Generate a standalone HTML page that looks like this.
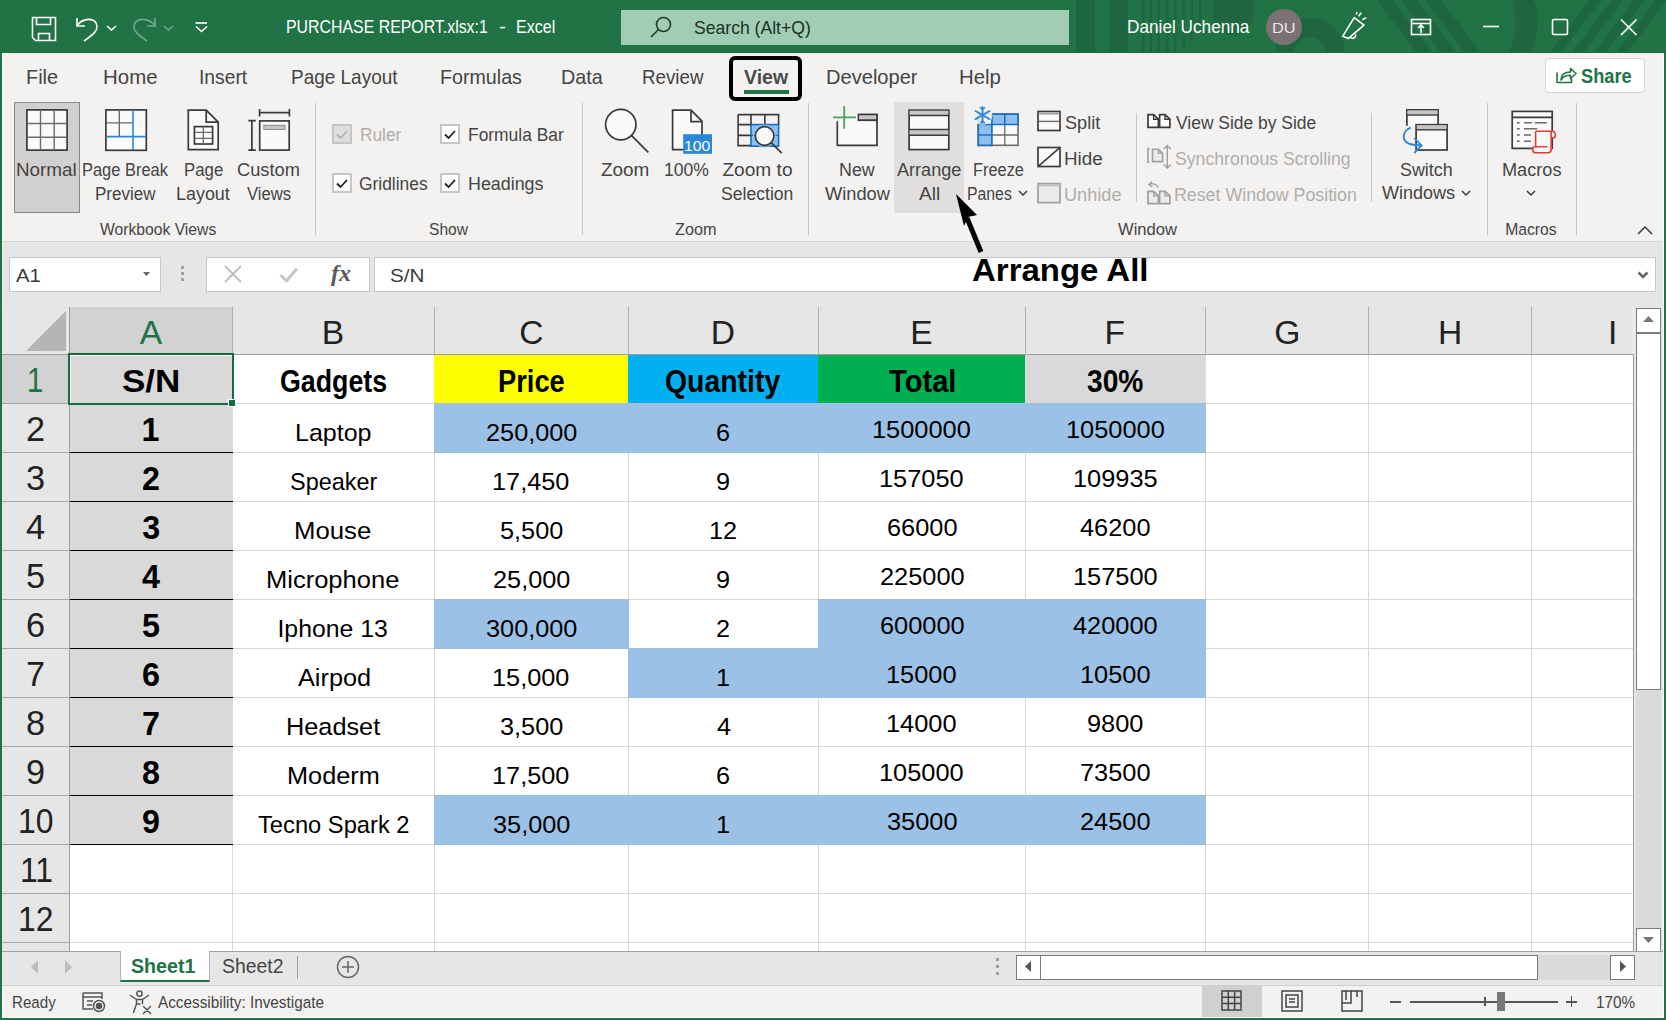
<!DOCTYPE html>
<html><head><meta charset="utf-8">
<style>
*{margin:0;padding:0;box-sizing:border-box}
html,body{width:1666px;height:1020px;overflow:hidden;background:#f3f2f1;font-family:"Liberation Sans",sans-serif;color:#444}
.a{position:absolute}
.t{position:absolute;white-space:nowrap;line-height:1}
svg{position:absolute;overflow:visible}
</style></head><body>

<div class="a" style="left:0px;top:0px;width:1666px;height:53px;background:#217346;overflow:hidden"></div>
<svg width="1666" height="53" style="left:0;top:0"><defs><clipPath id="tb"><rect x="0" y="0" width="1666" height="52"/></clipPath></defs><g clip-path="url(#tb)"><g fill="#1e6640"><rect x="1076" y="0" width="19" height="53"/><rect x="1110" y="0" width="18" height="53"/><rect x="1142" y="0" width="2.6" height="53"/><rect x="1149.5" y="0" width="2.6" height="53"/><rect x="1157" y="0" width="2.6" height="53"/><rect x="1166" y="0" width="2.6" height="53"/><rect x="1174" y="0" width="2.6" height="53"/><rect x="1182.5" y="0" width="2.6" height="48"/><rect x="1190.5" y="0" width="2.6" height="40"/><rect x="1198.7" y="0" width="2.6" height="30"/><path d="M1213 0v15a20.3 20.3 0 0 0 40.6 0V0z"/><path d="M1377 0h16l40 53h-16z"/><path d="M1401 0h16l40 53h-16z"/><path d="M1425 0h16l40 53h-16z"/><path d="M1512 0h22c6 18 4 38-3 53h-22c7-15 9-35 3-53z"/><path d="M1550 53h11l40-53h-11z"/><path d="M1572 53h11l40-53h-11z"/><path d="M1594 53h11l40-53h-11z"/><path d="M1616 53h11l40-53h-11z"/></g><circle cx="1310" cy="53" r="25.5" fill="none" stroke="#1e6640" stroke-width="19"/></g></svg>
<svg width="240" height="53" style="left:0;top:0" fill="none" stroke="#fff" stroke-width="1.6"><path d="M32.5 17.5h23v23h-20l-3-3z"/><path d="M36.5 17.5v7h14v-7"/><path d="M38.5 40.5v-7h11v7"/><path d="M77 18v8h8"/><path d="M77 26 C82 18 97 16 97 27 C97 31 94 34 84 41"/><path d="M107 26l4.5 4 4.5-4"/></svg>
<svg width="240" height="53" style="left:0;top:0" fill="none" stroke="#6fa98a" stroke-width="1.6"><path d="M155 18v8h-8"/><path d="M155 26 C150 18 134 16 134 27 C134 31 137 34 147 41"/><path d="M164 26l4.5 4 4.5-4"/></svg>
<svg width="240" height="53" style="left:0;top:0" fill="none" stroke="#fff" stroke-width="1.6"><path d="M195.5 23h11.5"/><path d="M196 26.5l5.5 5 5.5-5"/></svg>
<div class="t" style="left:285.73px;top:18.36px;font-size:18.71px;color:#fff;transform:scaleX(0.8499);transform-origin:0 0;">PURCHASE REPORT.xlsx:1</div>
<div class="t" style="left:499.08px;top:18.36px;font-size:18.71px;color:#fff;transform:scaleX(1.0905);transform-origin:0 0;">-</div>
<div class="t" style="left:515.71px;top:18.36px;font-size:18.71px;color:#fff;transform:scaleX(0.8596);transform-origin:0 0;">Excel</div>
<div class="a" style="left:621px;top:10px;width:448px;height:35px;background:#a0cdb4;"></div>
<svg width="30" height="30" style="left:648px;top:14px" fill="none" stroke="#1d3a2a" stroke-width="1.6"><circle cx="15.5" cy="10.5" r="7"/><path d="M10.5 15.5L3 23"/></svg>
<div class="t" style="left:693.91px;top:18.12px;font-size:19.00px;color:#1b3326;transform:scaleX(0.9254);transform-origin:0 0;">Search (Alt+Q)</div>
<div class="t" style="left:1127.12px;top:18.04px;font-size:18.86px;color:#fff;transform:scaleX(0.9121);transform-origin:0 0;">Daniel Uchenna</div>
<div class="a" style="left:1266px;top:9px;width:36px;height:36px;border-radius:50%;background:#7d7273"></div>
<div class="t" style="left:1271.99px;top:20.18px;font-size:15.14px;color:#e8e8e8;transform:scaleX(1.0844);transform-origin:0 0;">DU</div>
<svg width="1666" height="53" style="left:0;top:0" fill="none" stroke="#fff" stroke-width="1.6"><path d="M1342.8 36.2L1354.2 17.6L1364 25.2L1348.4 38.4Z" stroke-linejoin="round"/><path d="M1350.2 36.6a2.8 2.8 0 1 0 5.2-2.2"/><path d="M1358.6 16.4l2.6-3.6M1362.4 19.8l3.8-2.2M1356.4 14.6l0.4-2.6"/><rect x="1411.5" y="19.5" width="19" height="15"/><path d="M1411.5 23.5h19"/><path d="M1421 33v-8M1418 28l3-3 3 3"/><path d="M1483 26.5h16"/><rect x="1552.5" y="19.5" width="15" height="15" rx="1.5"/><path d="M1621 19.5l15.5 15.5M1636.5 19.5l-15.5 15.5"/></svg>
<div class="a" style="left:0px;top:53px;width:2px;height:967px;background:#217346;z-index:5"></div>
<div class="a" style="left:2px;top:53px;width:1px;height:189px;background:#fdfdfd;z-index:5"></div>
<div class="a" style="left:2px;top:242px;width:1px;height:65px;background:#ededed;z-index:5"></div>
<div class="a" style="left:2px;top:986px;width:1px;height:32px;background:#fdfdfd;z-index:5"></div>
<div class="a" style="left:1663px;top:53px;width:1px;height:965px;background:#fdfdfd;z-index:5"></div>
<div class="a" style="left:1664px;top:53px;width:2px;height:967px;background:#217346;z-index:5"></div>
<div class="a" style="left:2px;top:53px;width:1662px;height:1px;background:#fdfdfd;z-index:5"></div>
<div class="a" style="left:2px;top:1017px;width:1662px;height:1px;background:#fdfdfd;z-index:5"></div>
<div class="a" style="left:0px;top:1018px;width:1666px;height:2px;background:#217346;z-index:5"></div>
<div class="a" style="left:0px;top:52px;width:1666px;height:1px;background:#1a6a3c;z-index:5"></div>
<div class="t" style="left:25.81px;top:66.93px;font-size:20.29px;color:#444;transform:scaleX(0.9826);transform-origin:0 0;">File</div>
<div class="t" style="left:103.36px;top:66.93px;font-size:20.29px;color:#444;transform:scaleX(1.0092);transform-origin:0 0;">Home</div>
<div class="t" style="left:199.27px;top:66.93px;font-size:20.29px;color:#444;transform:scaleX(0.9490);transform-origin:0 0;">Insert</div>
<div class="t" style="left:290.88px;top:66.93px;font-size:20.29px;color:#444;transform:scaleX(0.9351);transform-origin:0 0;">Page Layout</div>
<div class="t" style="left:439.73px;top:66.93px;font-size:20.29px;color:#444;transform:scaleX(0.9689);transform-origin:0 0;">Formulas</div>
<div class="t" style="left:560.92px;top:66.93px;font-size:20.29px;color:#444;transform:scaleX(0.9738);transform-origin:0 0;">Data</div>
<div class="t" style="left:641.50px;top:66.93px;font-size:20.29px;color:#444;transform:scaleX(0.9243);transform-origin:0 0;">Review</div>
<div class="t" style="left:743.80px;top:66.93px;font-size:20.29px;color:#4a4a4a;font-weight:bold;transform:scaleX(0.9619);transform-origin:0 0;">View</div>
<div class="t" style="left:826.39px;top:66.93px;font-size:20.29px;color:#444;transform:scaleX(0.9903);transform-origin:0 0;">Developer</div>
<div class="t" style="left:958.87px;top:66.93px;font-size:20.29px;color:#444;transform:scaleX(1.0063);transform-origin:0 0;">Help</div>
<div class="a" style="left:744px;top:90px;width:45px;height:4px;background:#217346;"></div>
<div class="a" style="left:729px;top:56px;width:73px;height:45px;border:4px solid #000;border-radius:6px"></div>
<div class="a" style="left:1545px;top:58px;width:100px;height:35px;background:#fff;border:1px solid #d6d4d2;border-radius:4px"></div>
<svg width="24" height="24" style="left:1556px;top:64px" fill="none" stroke="#217346" stroke-width="1.6" stroke-linejoin="round"><path d="M1 8.5v10h14.5v-4"/><path d="M5 15.5c0.5-5 4-7.5 9.5-7.5V4.5l5.5 5-5.5 5v-3.2c-4.5 0-7.5 1.5-9.5 4.7z"/></svg>
<div class="t" style="left:1580.95px;top:66.03px;font-size:20.29px;color:#217346;font-weight:bold;transform:scaleX(0.8988);transform-origin:0 0;">Share</div>
<div class="a" style="left:0px;top:241px;width:1666px;height:1px;background:#d6d4d2;"></div>
<div class="a" style="left:0px;top:242px;width:1666px;height:65px;background:#e6e6e6;"></div>
<div class="a" style="left:14px;top:102px;width:66px;height:111px;background:#d2d0ce;border:1px solid #8a8886"></div>
<div class="t" style="left:16.09px;top:160.10px;font-size:19.14px;color:#444;transform:scaleX(0.9853);transform-origin:0 0;">Normal</div>
<div class="t" style="left:82.38px;top:160.10px;font-size:19.14px;color:#444;transform:scaleX(0.8600);transform-origin:0 0;">Page Break</div>
<div class="t" style="left:95.14px;top:183.80px;font-size:19.14px;color:#444;transform:scaleX(0.8902);transform-origin:0 0;">Preview</div>
<div class="t" style="left:184.45px;top:160.10px;font-size:19.14px;color:#444;transform:scaleX(0.8793);transform-origin:0 0;">Page</div>
<div class="t" style="left:176.26px;top:183.80px;font-size:19.14px;color:#444;transform:scaleX(0.9373);transform-origin:0 0;">Layout</div>
<div class="t" style="left:237.09px;top:160.10px;font-size:19.14px;color:#444;transform:scaleX(0.9537);transform-origin:0 0;">Custom</div>
<div class="t" style="left:247.42px;top:183.80px;font-size:19.14px;color:#444;transform:scaleX(0.8706);transform-origin:0 0;">Views</div>
<div class="t" style="left:99.92px;top:221.70px;font-size:15.71px;color:#444;">Workbook Views</div>
<div class="a" style="left:315px;top:103px;width:1px;height:132px;background:#c8c6c4;"></div>
<div class="a" style="left:332px;top:124px;width:20px;height:20px;border:2px solid #c8c6c4;background:#e1dfdd"></div>
<svg width="20" height="20" style="left:332px;top:124px" fill="none" stroke="#b3b0ad" stroke-width="1.8"><path d="M5 10.5l3.5 3.5L15 7"/></svg>
<div class="t" style="left:359.52px;top:126.34px;font-size:18.86px;color:#b0aeab;transform:scaleX(0.9147);transform-origin:0 0;">Ruler</div>
<div class="a" style="left:332px;top:173px;width:20px;height:20px;border:2px solid #c8c6c4;background:#fff"></div>
<svg width="20" height="20" style="left:332px;top:173px" fill="none" stroke="#201f1e" stroke-width="1.8"><path d="M5 10.5l3.5 3.5L15 7"/></svg>
<div class="a" style="left:440px;top:124px;width:20px;height:20px;border:2px solid #c8c6c4;background:#fff"></div>
<svg width="20" height="20" style="left:440px;top:124px" fill="none" stroke="#201f1e" stroke-width="1.8"><path d="M5 10.5l3.5 3.5L15 7"/></svg>
<div class="a" style="left:440px;top:173px;width:20px;height:20px;border:2px solid #c8c6c4;background:#fff"></div>
<svg width="20" height="20" style="left:440px;top:173px" fill="none" stroke="#201f1e" stroke-width="1.8"><path d="M5 10.5l3.5 3.5L15 7"/></svg>
<div class="t" style="left:467.61px;top:126.34px;font-size:18.86px;color:#444;transform:scaleX(0.9232);transform-origin:0 0;">Formula Bar</div>
<div class="t" style="left:359.43px;top:175.24px;font-size:18.86px;color:#444;transform:scaleX(0.9218);transform-origin:0 0;">Gridlines</div>
<div class="t" style="left:467.57px;top:175.24px;font-size:18.86px;color:#444;transform:scaleX(0.9471);transform-origin:0 0;">Headings</div>
<div class="t" style="left:428.50px;top:221.70px;font-size:15.71px;color:#444;transform:scaleX(0.9908);transform-origin:0 0;">Show</div>
<div class="a" style="left:582px;top:103px;width:1px;height:132px;background:#c8c6c4;"></div>
<div class="t" style="left:601.43px;top:160.10px;font-size:19.14px;color:#444;transform:scaleX(0.9896);transform-origin:0 0;">Zoom</div>
<div class="t" style="left:664.48px;top:160.10px;font-size:19.14px;color:#444;transform:scaleX(0.9190);transform-origin:0 0;">100%</div>
<div class="t" style="left:722.42px;top:160.10px;font-size:19.14px;color:#444;">Zoom to</div>
<div class="t" style="left:721.21px;top:183.80px;font-size:19.14px;color:#444;transform:scaleX(0.9196);transform-origin:0 0;">Selection</div>
<div class="t" style="left:674.51px;top:221.70px;font-size:15.71px;color:#444;transform:scaleX(1.0347);transform-origin:0 0;">Zoom</div>
<div class="a" style="left:808px;top:103px;width:1px;height:132px;background:#c8c6c4;"></div>
<div class="a" style="left:894px;top:102px;width:70px;height:111px;background:#e1dfdd;"></div>
<div class="t" style="left:839.17px;top:160.10px;font-size:19.14px;color:#444;transform:scaleX(0.9335);transform-origin:0 0;">New</div>
<div class="t" style="left:824.61px;top:183.80px;font-size:19.14px;color:#444;transform:scaleX(0.9537);transform-origin:0 0;">Window</div>
<div class="t" style="left:896.91px;top:160.10px;font-size:19.14px;color:#444;transform:scaleX(0.9449);transform-origin:0 0;">Arrange</div>
<div class="t" style="left:918.90px;top:183.80px;font-size:19.14px;color:#444;">All</div>
<div class="t" style="left:972.69px;top:160.10px;font-size:19.14px;color:#444;transform:scaleX(0.8558);transform-origin:0 0;">Freeze</div>
<div class="t" style="left:966.74px;top:183.80px;font-size:19.14px;color:#444;transform:scaleX(0.8258);transform-origin:0 0;">Panes</div>
<svg width="12" height="8" style="left:1017.5px;top:189.5px" fill="none" stroke="#3b3a39" stroke-width="1.5"><path d="M1 1l4 4 4-4"/></svg>
<div class="t" style="left:1064.69px;top:113.64px;font-size:18.86px;color:#444;transform:scaleX(0.9599);transform-origin:0 0;">Split</div>
<div class="t" style="left:1063.99px;top:149.84px;font-size:18.86px;color:#444;">Hide</div>
<div class="t" style="left:1064.14px;top:185.64px;font-size:18.86px;color:#b0aeab;transform:scaleX(0.9615);transform-origin:0 0;">Unhide</div>
<div class="a" style="left:1136px;top:113px;width:1px;height:89px;background:#c8c6c4;"></div>
<div class="t" style="left:1175.61px;top:113.64px;font-size:18.86px;color:#444;transform:scaleX(0.9245);transform-origin:0 0;">View Side by Side</div>
<div class="t" style="left:1174.91px;top:149.54px;font-size:18.86px;color:#b0aeab;transform:scaleX(0.9361);transform-origin:0 0;">Synchronous Scrolling</div>
<div class="t" style="left:1174.28px;top:186.04px;font-size:18.86px;color:#b0aeab;transform:scaleX(0.9429);transform-origin:0 0;">Reset Window Position</div>
<div class="t" style="left:1117.92px;top:221.70px;font-size:15.71px;color:#444;transform:scaleX(1.0561);transform-origin:0 0;">Window</div>
<div class="a" style="left:1371px;top:113px;width:1px;height:89px;background:#c8c6c4;"></div>
<div class="t" style="left:1400.20px;top:160.20px;font-size:19.14px;color:#444;transform:scaleX(0.9342);transform-origin:0 0;">Switch</div>
<div class="t" style="left:1381.51px;top:183.40px;font-size:19.14px;color:#444;transform:scaleX(0.9420);transform-origin:0 0;">Windows</div>
<svg width="12" height="8" style="left:1461px;top:190px" fill="none" stroke="#3b3a39" stroke-width="1.5"><path d="M1 1l4 4 4-4"/></svg>
<div class="a" style="left:1487px;top:103px;width:1px;height:132px;background:#c8c6c4;"></div>
<div class="t" style="left:1501.55px;top:160.10px;font-size:19.14px;color:#444;transform:scaleX(0.9490);transform-origin:0 0;">Macros</div>
<svg width="12" height="8" style="left:1526px;top:190px" fill="none" stroke="#3b3a39" stroke-width="1.5"><path d="M1 1l4 4 4-4"/></svg>
<div class="t" style="left:1505.15px;top:221.70px;font-size:15.71px;color:#444;">Macros</div>
<div class="a" style="left:1576px;top:103px;width:1px;height:132px;background:#c8c6c4;"></div>
<svg width="20" height="12" style="left:1637px;top:226px" fill="none" stroke="#3b3a39" stroke-width="1.5"><path d="M1 8l7-7 7 7"/></svg>
<svg width="1666" height="260" style="left:0;top:0" fill="none" stroke-linejoin="miter"><rect x="26.9" y="109.9" width="40.2" height="40.2" fill="#fafafa" stroke="#3b3a39" stroke-width="1.7"/><path d="M40.5 110v40M54.2 110v40M27 123.5h40M27 137.2h40" stroke="#6e6b68" stroke-width="1.4"/><rect x="105.9" y="109.9" width="40.4" height="40.4" fill="#fafafa" stroke="#3b3a39" stroke-width="1.7"/><path d="M119.3 110v26.5M106 122.9h26.5" stroke="#6e6b68" stroke-width="1.4"/><path d="M133 110v40M106 136.6h40" stroke="#2b88d8" stroke-width="1.6"/><path d="M188.3 110.1H206.2L218.2 122.1V149.7H188.3Z" fill="#fafafa" stroke="#3b3a39" stroke-width="1.7"/><path d="M206.2 110.1V122.1H218.2" stroke="#3b3a39" stroke-width="1.7"/><rect x="194.4" y="126.6" width="18.2" height="17.4" fill="#fafafa" stroke="#3b3a39" stroke-width="1.7"/><path d="M203.3 127v17M195 132.4h17M195 138.4h17" stroke="#6e6b68" stroke-width="1.3"/><path d="M259.6 112.7H289.4M259.6 109v7.5M289.4 109v7.5" stroke="#3b3a39" stroke-width="1.7"/><path d="M251.9 120.6V150.1M248.4 120.6h7.4M248.4 150.1h7.4" stroke="#3b3a39" stroke-width="1.7"/><rect x="259.7" y="120.9" width="29.5" height="29.2" fill="#fafafa" stroke="#3b3a39" stroke-width="1.7"/><rect x="263.8" y="125.3" width="21.2" height="4.1" fill="#c8c6c4" stroke="#8a8886" stroke-width="1"/><circle cx="620.8" cy="124.6" r="15.2" fill="#fafafa" stroke="#3b3a39" stroke-width="1.7"/><path d="M631.6 135.6L648.3 152.3" stroke="#3b3a39" stroke-width="1.7"/><path d="M672.6 110.1H691L702 121.1V149.7H672.6Z" fill="#fafafa" stroke="#3b3a39" stroke-width="1.7"/><path d="M691 110.1V121.6H702" stroke="#3b3a39" stroke-width="1.7"/><rect x="683.2" y="134.2" width="28.8" height="19.6" fill="#2b88d8"/><rect x="751" y="124.6" width="27.6" height="21.6" fill="#8cc1ef" stroke="#1b6ec2" stroke-width="1.6"/><path d="M738.1 114.6H778.6V124.6M738.1 114.6V145.6H751M751 114.6v10M764.9 114.6v10M738.1 124.6H751M738.1 135.4H751" stroke="#3b3a39" stroke-width="1.6"/><path d="M764.9 124.6v21M751 135.4h27.6" stroke="#1b6ec2" stroke-width="1.2"/><circle cx="764.6" cy="136" r="9.3" fill="#fafafa" stroke="#3b3a39" stroke-width="1.7"/><circle cx="764.6" cy="136" r="11" fill="none" stroke="#8cc1ef" stroke-width="1.3" opacity="0.6"/><path d="M771.4 142.8L781.8 153.2" stroke="#3b3a39" stroke-width="1.7"/><path d="M837.3 121.3V145.3H877V114.5H858.5" fill="#fafafa" stroke="#3b3a39" stroke-width="1.7"/><rect x="858.3" y="114.5" width="18.6" height="5.8" fill="#c8c6c4" stroke="#3b3a39" stroke-width="1.5"/><path d="M858.5 120.3H877" stroke="#3b3a39" stroke-width="1.5"/><path d="M844.2 106v22.8M833 117.3h23" stroke="#48a45f" stroke-width="1.8"/><rect x="909.1" y="110.2" width="39.7" height="39.4" fill="#fafafa" stroke="#3b3a39" stroke-width="1.7"/><rect x="909.6" y="110.7" width="38.7" height="4.6" fill="#c8c6c4"/><rect x="909.6" y="130.3" width="38.7" height="4.6" fill="#c8c6c4"/><path d="M909 115.6h40M909 129.6h40M909 135.2h40" stroke="#3b3a39" stroke-width="1.5"/><rect x="978.3" y="114.2" width="39.7" height="31.1" fill="#fafafa" stroke="#6e6b68" stroke-width="1.6"/><path d="M1004.8 124.5v21M978.3 135h40" stroke="#6e6b68" stroke-width="1.3"/><path d="M991.9 114.2H1018V124.5H991.9Z" fill="#8cc1ef" stroke="#1b6ec2" stroke-width="1.7"/><path d="M1004.8 114.2v10.3" stroke="#1b6ec2" stroke-width="1.5"/><path d="M978.3 124.5H991.9V145.3H978.3Z" fill="#8cc1ef" stroke="#1b6ec2" stroke-width="1.7"/><path d="M978.3 135h13.6" stroke="#1b6ec2" stroke-width="1.5"/><circle cx="982.5" cy="115.1" r="10" fill="#f3f2f1" opacity="0.85"/><g stroke="#2b88d8" stroke-width="1.9" stroke-linecap="round"><path d="M982.5 107v16.2M975.5 111l14 8.1M975.5 119.1l14-8.1"/><path d="M980.3 107.5l2.2 2 2.2-2M980.3 122.7l2.2-2 2.2 2" stroke-width="1.3"/></g><rect x="1038" y="111.5" width="22" height="19" fill="#fafafa" stroke="#3b3a39" stroke-width="1.7"/><path d="M1038 113.8h22" stroke="#8a8886" stroke-width="1.2"/><path d="M1038 121.4h22" stroke="#6e6b68" stroke-width="1.4"/><rect x="1038" y="147.5" width="22" height="19" fill="#fafafa" stroke="#3b3a39" stroke-width="1.7"/><path d="M1038.5 166.2L1059.5 147.8" stroke="#3b3a39" stroke-width="1.6"/><rect x="1038" y="183.6" width="22" height="19" fill="#ebebeb" stroke="#a19f9d" stroke-width="1.7"/><path d="M1038 185.6h22" stroke="#bdbbb8" stroke-width="1.3"/><path d="M1148 114.6H1153.6L1158.4 119.2V127.4H1148Z" fill="#fafafa" stroke="#3b3a39" stroke-width="1.7"/><path d="M1153.6 114.6V119.2H1158.4" stroke="#3b3a39" stroke-width="1.4"/><path d="M1159.6 114.6H1165L1169.9 119.2V127.4H1159.6Z" fill="#fafafa" stroke="#3b3a39" stroke-width="1.7"/><path d="M1165 114.6V119.2H1169.9" stroke="#3b3a39" stroke-width="1.4"/><path d="M1149.6 148.8H1148V162.2H1149.6" stroke="#a19f9d" stroke-width="1.6"/><path d="M1152.5 149.2H1158.4L1162.6 153.4V161.6H1152.5Z" fill="#ebebeb" stroke="#a19f9d" stroke-width="1.6"/><path d="M1158.4 149.2V153.4H1162.6" stroke="#a19f9d" stroke-width="1.3"/><path d="M1167.3 145.6V168M1163.8 149l3.5-3.5 3.5 3.5M1163.8 164.6l3.5 3.5 3.5-3.5" stroke="#a19f9d" stroke-width="1.4"/><path d="M1148 191.3H1153.6L1158.4 195.9V203.6H1148Z" fill="#ebebeb" stroke="#a19f9d" stroke-width="1.7"/><path d="M1153.6 191.3V195.9H1158.4" stroke="#a19f9d" stroke-width="1.3"/><path d="M1159.6 191.3H1165L1169.9 195.9V203.6H1159.6Z" fill="#ebebeb" stroke="#a19f9d" stroke-width="1.7"/><path d="M1165 191.3V195.9H1169.9" stroke="#a19f9d" stroke-width="1.3"/><path d="M1158 187.6C1157 184 1153 183 1149 184.6M1152 181.6l-3 3 3.4 2.4" stroke="#a19f9d" stroke-width="1.4"/><rect x="1407" y="110" width="31" height="15" fill="#fafafa"/><path d="M1406.9 125.8V109.8H1438.1V124.7" stroke="#3b3a39" stroke-width="1.7"/><rect x="1407.5" y="110.4" width="30" height="4.2" fill="#c8c6c4"/><path d="M1407 115h31" stroke="#3b3a39" stroke-width="1.4"/><rect x="1416.1" y="124.7" width="31" height="25.3" fill="#fafafa" stroke="#3b3a39" stroke-width="1.7"/><rect x="1416.8" y="125.3" width="29.6" height="4.2" fill="#c8c6c4"/><path d="M1416 129.8h31" stroke="#3b3a39" stroke-width="1.4"/><path d="M1410.6 127.6C1404.5 130 1402.5 136 1404.5 140C1406.5 144 1411 145.4 1422 145.4M1414.2 138.2L1421.6 145.4L1414.2 153" stroke="#2b88d8" stroke-width="1.8"/><rect x="1512.2" y="111.4" width="40" height="37" fill="#fafafa" stroke="#3b3a39" stroke-width="1.7"/><path d="M1512.2 117.4h40" stroke="#3b3a39" stroke-width="1.6"/><path d="M1516.9 122.8h2.9M1524 122.8h7.9M1534.9 122.8h12M1516.9 128.8h2.9M1524 128.8h13.3M1516.9 135h2.9M1524 135h7M1516.9 141.2h2.9M1524 141.2h7" stroke="#6e6b68" stroke-width="1.5"/><path d="M1535.6 131.3H1551.8C1554.6 131.3 1555.4 133 1555.4 135.3C1555.4 137.5 1554 138 1552.2 138H1551.2V149.6C1551.2 151.8 1550 152.7 1547.8 152.7H1535.3C1533.2 152.7 1532.6 151.4 1532.6 149.5C1532.6 147.7 1533.5 146.8 1535.2 146.8H1547.4M1535.6 131.3V146.8M1551.2 138V131.6" fill="#fafafa" stroke="#e53935" stroke-width="1.6"/></svg>
<div class="t" style="left:684.31px;top:138.30px;font-size:15.00px;color:#fff;transform:scaleX(1.0538);transform-origin:0 0;font-weight:normal;letter-spacing:0">100</div>
<div class="a" style="left:9px;top:257px;width:152px;height:35px;background:#fff;border:1px solid #c6c6c6"></div>
<div class="t" style="left:15.90px;top:265.80px;font-size:19.14px;color:#3a3a3a;transform:scaleX(1.0627);transform-origin:0 0;">A1</div>
<svg width="10" height="6" style="left:143px;top:272px"><path d="M0 0h7l-3.5 4z" fill="#666"/></svg>
<svg width="4" height="16" style="left:181px;top:266px" fill="#a0a0a0"><rect x="0" y="0" width="3" height="3"/><rect x="0" y="6" width="3" height="3"/><rect x="0" y="12" width="3" height="3"/></svg>
<div class="a" style="left:206px;top:257px;width:164px;height:35px;background:#fff;border:1px solid #c6c6c6"></div>
<svg width="30" height="30" style="left:224px;top:265px" fill="none" stroke="#c0c0c0" stroke-width="2"><path d="M1 1l16 16M17 1L1 17"/></svg>
<svg width="30" height="30" style="left:279px;top:266px" fill="none" stroke="#c6c6c6" stroke-width="3" stroke-linejoin="round"><path d="M1.5 9l6 6L18 2.5"/></svg>
<div class="t" style="left:331px;top:261px;font-family:'Liberation Serif',serif;font-style:italic;font-weight:bold;font-size:24px;color:#595959">fx</div>
<div class="a" style="left:374px;top:257px;width:1282px;height:35px;background:#fff;border:1px solid #c6c6c6"></div>
<div class="t" style="left:390.07px;top:265.80px;font-size:19.14px;color:#3a3a3a;transform:scaleX(1.0821);transform-origin:0 0;">S/N</div>
<svg width="14" height="10" style="left:1637px;top:271px" fill="none" stroke="#666" stroke-width="2.6"><path d="M1.5 1.5l4.5 4.5 4.5-4.5"/></svg>
<div class="a" style="left:2px;top:307px;width:1631px;height:644px;background:#fff;"></div>
<div class="a" style="left:2px;top:307px;width:67px;height:47px;background:#e6e6e6;"></div>
<svg width="67" height="47" style="left:2px;top:307px"><path d="M64 4V44H24z" fill="#b4b4b4"/></svg>
<div class="a" style="left:70px;top:307px;width:162px;height:47px;background:#d2d2d2;"></div>
<div class="a" style="left:232px;top:307px;width:1px;height:47px;background:#b0b0b0;"></div>
<div class="t" style="left:139.75px;top:315.78px;font-size:33.57px;color:#217346;">A</div>
<div class="a" style="left:233px;top:307px;width:201px;height:47px;background:#e6e6e6;"></div>
<div class="a" style="left:434px;top:307px;width:1px;height:47px;background:#b0b0b0;"></div>
<div class="t" style="left:321.83px;top:315.78px;font-size:33.57px;color:#222;">B</div>
<div class="a" style="left:435px;top:307px;width:193px;height:47px;background:#e6e6e6;"></div>
<div class="a" style="left:628px;top:307px;width:1px;height:47px;background:#b0b0b0;"></div>
<div class="t" style="left:519.25px;top:315.78px;font-size:33.57px;color:#222;">C</div>
<div class="a" style="left:629px;top:307px;width:189px;height:47px;background:#e6e6e6;"></div>
<div class="a" style="left:818px;top:307px;width:1px;height:47px;background:#b0b0b0;"></div>
<div class="t" style="left:710.83px;top:315.78px;font-size:33.57px;color:#222;">D</div>
<div class="a" style="left:819px;top:307px;width:206px;height:47px;background:#e6e6e6;"></div>
<div class="a" style="left:1025px;top:307px;width:1px;height:47px;background:#b0b0b0;"></div>
<div class="t" style="left:910.17px;top:315.78px;font-size:33.57px;color:#222;">E</div>
<div class="a" style="left:1026px;top:307px;width:179px;height:47px;background:#e6e6e6;"></div>
<div class="a" style="left:1205px;top:307px;width:1px;height:47px;background:#b0b0b0;"></div>
<div class="t" style="left:1104.59px;top:315.78px;font-size:33.57px;color:#222;">F</div>
<div class="a" style="left:1206px;top:307px;width:162px;height:47px;background:#e6e6e6;"></div>
<div class="a" style="left:1368px;top:307px;width:1px;height:47px;background:#b0b0b0;"></div>
<div class="t" style="left:1274.33px;top:315.78px;font-size:33.57px;color:#222;">G</div>
<div class="a" style="left:1369px;top:307px;width:162px;height:47px;background:#e6e6e6;"></div>
<div class="a" style="left:1531px;top:307px;width:1px;height:47px;background:#b0b0b0;"></div>
<div class="t" style="left:1437.91px;top:315.78px;font-size:33.57px;color:#222;">H</div>
<div class="a" style="left:1532px;top:307px;width:101px;height:47px;background:#e6e6e6;"></div>
<div class="t" style="left:1607.88px;top:315.78px;font-size:33.57px;color:#222;">I</div>
<div class="a" style="left:2px;top:354px;width:1631px;height:1px;background:#9e9e9e;"></div>
<div class="a" style="left:69px;top:307px;width:1px;height:644px;background:#9e9e9e;"></div>
<div class="a" style="left:2px;top:355px;width:67px;height:48px;background:#d2d2d2;"></div>
<div class="a" style="left:2px;top:403px;width:67px;height:1px;background:#a6a6a6;"></div>
<div class="t" style="left:27.05px;top:363.28px;font-size:34.29px;color:#217346;transform:scaleX(0.8500);transform-origin:0 0;">1</div>
<div class="a" style="left:2px;top:404px;width:67px;height:48px;background:#e6e6e6;"></div>
<div class="a" style="left:2px;top:452px;width:67px;height:1px;background:#a6a6a6;"></div>
<div class="t" style="left:25.99px;top:412.28px;font-size:34.29px;color:#222;">2</div>
<div class="a" style="left:2px;top:453px;width:67px;height:48px;background:#e6e6e6;"></div>
<div class="a" style="left:2px;top:501px;width:67px;height:1px;background:#a6a6a6;"></div>
<div class="t" style="left:26.07px;top:461.28px;font-size:34.29px;color:#222;">3</div>
<div class="a" style="left:2px;top:502px;width:67px;height:48px;background:#e6e6e6;"></div>
<div class="a" style="left:2px;top:550px;width:67px;height:1px;background:#a6a6a6;"></div>
<div class="t" style="left:26.07px;top:510.28px;font-size:34.29px;color:#222;">4</div>
<div class="a" style="left:2px;top:551px;width:67px;height:48px;background:#e6e6e6;"></div>
<div class="a" style="left:2px;top:599px;width:67px;height:1px;background:#a6a6a6;"></div>
<div class="t" style="left:25.99px;top:559.28px;font-size:34.29px;color:#222;">5</div>
<div class="a" style="left:2px;top:600px;width:67px;height:48px;background:#e6e6e6;"></div>
<div class="a" style="left:2px;top:648px;width:67px;height:1px;background:#a6a6a6;"></div>
<div class="t" style="left:25.90px;top:608.28px;font-size:34.29px;color:#222;">6</div>
<div class="a" style="left:2px;top:649px;width:67px;height:48px;background:#e6e6e6;"></div>
<div class="a" style="left:2px;top:697px;width:67px;height:1px;background:#a6a6a6;"></div>
<div class="t" style="left:25.99px;top:657.28px;font-size:34.29px;color:#222;">7</div>
<div class="a" style="left:2px;top:698px;width:67px;height:48px;background:#e6e6e6;"></div>
<div class="a" style="left:2px;top:746px;width:67px;height:1px;background:#a6a6a6;"></div>
<div class="t" style="left:25.90px;top:706.28px;font-size:34.29px;color:#222;">8</div>
<div class="a" style="left:2px;top:747px;width:67px;height:48px;background:#e6e6e6;"></div>
<div class="a" style="left:2px;top:795px;width:67px;height:1px;background:#a6a6a6;"></div>
<div class="t" style="left:25.99px;top:755.28px;font-size:34.29px;color:#222;">9</div>
<div class="a" style="left:2px;top:796px;width:67px;height:48px;background:#e6e6e6;"></div>
<div class="a" style="left:2px;top:844px;width:67px;height:1px;background:#a6a6a6;"></div>
<div class="t" style="left:18.25px;top:804.28px;font-size:34.29px;color:#222;transform:scaleX(0.9300);transform-origin:0 0;">10</div>
<div class="a" style="left:2px;top:845px;width:67px;height:48px;background:#e6e6e6;"></div>
<div class="a" style="left:2px;top:893px;width:67px;height:1px;background:#a6a6a6;"></div>
<div class="t" style="left:19.60px;top:853.28px;font-size:34.29px;color:#222;transform:scaleX(0.9300);transform-origin:0 0;">11</div>
<div class="a" style="left:2px;top:894px;width:67px;height:48px;background:#e6e6e6;"></div>
<div class="a" style="left:2px;top:942px;width:67px;height:1px;background:#a6a6a6;"></div>
<div class="t" style="left:18.40px;top:902.28px;font-size:34.29px;color:#222;transform:scaleX(0.9300);transform-origin:0 0;">12</div>
<div class="a" style="left:2px;top:943px;width:67px;height:8px;background:#e6e6e6;"></div>
<div class="a" style="left:232px;top:355px;width:1px;height:596px;background:#d8d8d8;"></div>
<div class="a" style="left:434px;top:355px;width:1px;height:596px;background:#d8d8d8;"></div>
<div class="a" style="left:628px;top:355px;width:1px;height:596px;background:#d8d8d8;"></div>
<div class="a" style="left:818px;top:355px;width:1px;height:596px;background:#d8d8d8;"></div>
<div class="a" style="left:1025px;top:355px;width:1px;height:596px;background:#d8d8d8;"></div>
<div class="a" style="left:1205px;top:355px;width:1px;height:596px;background:#d8d8d8;"></div>
<div class="a" style="left:1368px;top:355px;width:1px;height:596px;background:#d8d8d8;"></div>
<div class="a" style="left:1531px;top:355px;width:1px;height:596px;background:#d8d8d8;"></div>
<div class="a" style="left:1633px;top:355px;width:1px;height:596px;background:#d8d8d8;"></div>
<div class="a" style="left:70px;top:403px;width:1563px;height:1px;background:#d8d8d8;"></div>
<div class="a" style="left:70px;top:452px;width:1563px;height:1px;background:#d8d8d8;"></div>
<div class="a" style="left:70px;top:501px;width:1563px;height:1px;background:#d8d8d8;"></div>
<div class="a" style="left:70px;top:550px;width:1563px;height:1px;background:#d8d8d8;"></div>
<div class="a" style="left:70px;top:599px;width:1563px;height:1px;background:#d8d8d8;"></div>
<div class="a" style="left:70px;top:648px;width:1563px;height:1px;background:#d8d8d8;"></div>
<div class="a" style="left:70px;top:697px;width:1563px;height:1px;background:#d8d8d8;"></div>
<div class="a" style="left:70px;top:746px;width:1563px;height:1px;background:#d8d8d8;"></div>
<div class="a" style="left:70px;top:795px;width:1563px;height:1px;background:#d8d8d8;"></div>
<div class="a" style="left:70px;top:844px;width:1563px;height:1px;background:#d8d8d8;"></div>
<div class="a" style="left:70px;top:893px;width:1563px;height:1px;background:#d8d8d8;"></div>
<div class="a" style="left:70px;top:942px;width:1563px;height:1px;background:#d8d8d8;"></div>
<div class="a" style="left:70px;top:355px;width:163px;height:49px;background:#d9d9d9;"></div>
<div class="a" style="left:434px;top:355px;width:195px;height:49px;background:#ffff00;"></div>
<div class="a" style="left:628px;top:355px;width:191px;height:49px;background:#00b0f0;"></div>
<div class="a" style="left:818px;top:355px;width:208px;height:49px;background:#00b050;"></div>
<div class="a" style="left:1025px;top:355px;width:181px;height:49px;background:#d9d9d9;"></div>
<div class="a" style="left:70px;top:403px;width:163px;height:50px;background:#d9d9d9;"></div>
<div class="a" style="left:434px;top:403px;width:195px;height:50px;background:#9bc2e6;"></div>
<div class="a" style="left:628px;top:403px;width:191px;height:50px;background:#9bc2e6;"></div>
<div class="a" style="left:818px;top:403px;width:208px;height:50px;background:#9bc2e6;"></div>
<div class="a" style="left:1025px;top:403px;width:181px;height:50px;background:#9bc2e6;"></div>
<div class="a" style="left:70px;top:452px;width:163px;height:50px;background:#d9d9d9;"></div>
<div class="a" style="left:70px;top:501px;width:163px;height:50px;background:#d9d9d9;"></div>
<div class="a" style="left:70px;top:550px;width:163px;height:50px;background:#d9d9d9;"></div>
<div class="a" style="left:70px;top:599px;width:163px;height:50px;background:#d9d9d9;"></div>
<div class="a" style="left:434px;top:599px;width:195px;height:50px;background:#9bc2e6;"></div>
<div class="a" style="left:818px;top:599px;width:208px;height:50px;background:#9bc2e6;"></div>
<div class="a" style="left:1025px;top:599px;width:181px;height:50px;background:#9bc2e6;"></div>
<div class="a" style="left:70px;top:648px;width:163px;height:50px;background:#d9d9d9;"></div>
<div class="a" style="left:628px;top:648px;width:191px;height:50px;background:#9bc2e6;"></div>
<div class="a" style="left:818px;top:648px;width:208px;height:50px;background:#9bc2e6;"></div>
<div class="a" style="left:1025px;top:648px;width:181px;height:50px;background:#9bc2e6;"></div>
<div class="a" style="left:70px;top:697px;width:163px;height:50px;background:#d9d9d9;"></div>
<div class="a" style="left:70px;top:746px;width:163px;height:50px;background:#d9d9d9;"></div>
<div class="a" style="left:70px;top:795px;width:163px;height:50px;background:#d9d9d9;"></div>
<div class="a" style="left:434px;top:795px;width:195px;height:50px;background:#9bc2e6;"></div>
<div class="a" style="left:628px;top:795px;width:191px;height:50px;background:#9bc2e6;"></div>
<div class="a" style="left:818px;top:795px;width:208px;height:50px;background:#9bc2e6;"></div>
<div class="a" style="left:1025px;top:795px;width:181px;height:50px;background:#9bc2e6;"></div>
<div class="a" style="left:70px;top:452px;width:163px;height:1px;background:#000;"></div>
<div class="a" style="left:70px;top:501px;width:163px;height:1px;background:#000;"></div>
<div class="a" style="left:70px;top:550px;width:163px;height:1px;background:#000;"></div>
<div class="a" style="left:70px;top:599px;width:163px;height:1px;background:#000;"></div>
<div class="a" style="left:70px;top:648px;width:163px;height:1px;background:#000;"></div>
<div class="a" style="left:70px;top:697px;width:163px;height:1px;background:#000;"></div>
<div class="a" style="left:70px;top:746px;width:163px;height:1px;background:#000;"></div>
<div class="a" style="left:70px;top:795px;width:163px;height:1px;background:#000;"></div>
<div class="a" style="left:70px;top:844px;width:163px;height:1px;background:#000;"></div>
<div class="t" style="left:122.45px;top:365.29px;font-size:32.14px;color:#000;font-weight:bold;transform:scaleX(1.0900);transform-origin:0 0;">S/N</div>
<div class="t" style="left:279.95px;top:365.29px;font-size:32.14px;color:#000;font-weight:bold;transform:scaleX(0.8330);transform-origin:0 0;">Gadgets</div>
<div class="t" style="left:497.73px;top:365.29px;font-size:32.14px;color:#000;font-weight:bold;transform:scaleX(0.8490);transform-origin:0 0;">Price</div>
<div class="t" style="left:665.39px;top:365.29px;font-size:32.14px;color:#000;font-weight:bold;transform:scaleX(0.8840);transform-origin:0 0;">Quantity</div>
<div class="t" style="left:889.20px;top:365.29px;font-size:32.14px;color:#000;font-weight:bold;transform:scaleX(0.9070);transform-origin:0 0;">Total</div>
<div class="t" style="left:1087.31px;top:365.29px;font-size:32.14px;color:#000;font-weight:bold;transform:scaleX(0.8770);transform-origin:0 0;">30%</div>
<div class="t" style="left:141.39px;top:413.67px;font-size:32.29px;color:#000;font-weight:bold;">1</div>
<div class="t" style="left:294.71px;top:421.01px;font-size:24.80px;color:#000;transform:scaleX(1.0090);transform-origin:0 0;">Laptop</div>
<div class="t" style="left:485.65px;top:421.01px;font-size:24.80px;color:#000;transform:scaleX(1.0200);transform-origin:0 0;">250,000</div>
<div class="t" style="left:716.42px;top:421.01px;font-size:24.80px;color:#000;transform:scaleX(1.0200);transform-origin:0 0;">6</div>
<div class="t" style="left:872.21px;top:418.01px;font-size:24.80px;color:#000;transform:scaleX(1.0230);transform-origin:0 0;">1500000</div>
<div class="t" style="left:1065.71px;top:418.01px;font-size:24.80px;color:#000;transform:scaleX(1.0230);transform-origin:0 0;">1050000</div>
<div class="t" style="left:142.12px;top:462.67px;font-size:32.29px;color:#000;font-weight:bold;">2</div>
<div class="t" style="left:289.56px;top:470.01px;font-size:24.80px;color:#000;transform:scaleX(0.9450);transform-origin:0 0;">Speaker</div>
<div class="t" style="left:492.35px;top:470.01px;font-size:24.80px;color:#000;transform:scaleX(1.0200);transform-origin:0 0;">17,450</div>
<div class="t" style="left:716.48px;top:470.01px;font-size:24.80px;color:#000;transform:scaleX(1.0200);transform-origin:0 0;">9</div>
<div class="t" style="left:879.25px;top:467.01px;font-size:24.80px;color:#000;transform:scaleX(1.0230);transform-origin:0 0;">157050</div>
<div class="t" style="left:1072.75px;top:467.01px;font-size:24.80px;color:#000;transform:scaleX(1.0230);transform-origin:0 0;">109935</div>
<div class="t" style="left:142.20px;top:511.67px;font-size:32.29px;color:#000;font-weight:bold;">3</div>
<div class="t" style="left:294.44px;top:519.01px;font-size:24.80px;color:#000;transform:scaleX(1.0380);transform-origin:0 0;">Mouse</div>
<div class="t" style="left:499.88px;top:519.01px;font-size:24.80px;color:#000;transform:scaleX(1.0200);transform-origin:0 0;">5,500</div>
<div class="t" style="left:709.14px;top:519.01px;font-size:24.80px;color:#000;transform:scaleX(1.0200);transform-origin:0 0;">12</div>
<div class="t" style="left:886.61px;top:516.01px;font-size:24.80px;color:#000;transform:scaleX(1.0230);transform-origin:0 0;">66000</div>
<div class="t" style="left:1080.43px;top:516.01px;font-size:24.80px;color:#000;transform:scaleX(1.0230);transform-origin:0 0;">46200</div>
<div class="t" style="left:141.88px;top:560.67px;font-size:32.29px;color:#000;font-weight:bold;">4</div>
<div class="t" style="left:266.38px;top:568.01px;font-size:24.80px;color:#000;transform:scaleX(1.0290);transform-origin:0 0;">Microphone</div>
<div class="t" style="left:492.67px;top:568.01px;font-size:24.80px;color:#000;transform:scaleX(1.0200);transform-origin:0 0;">25,000</div>
<div class="t" style="left:716.48px;top:568.01px;font-size:24.80px;color:#000;transform:scaleX(1.0200);transform-origin:0 0;">9</div>
<div class="t" style="left:879.57px;top:565.01px;font-size:24.80px;color:#000;transform:scaleX(1.0230);transform-origin:0 0;">225000</div>
<div class="t" style="left:1072.75px;top:565.01px;font-size:24.80px;color:#000;transform:scaleX(1.0230);transform-origin:0 0;">157500</div>
<div class="t" style="left:141.96px;top:609.67px;font-size:32.29px;color:#000;font-weight:bold;">5</div>
<div class="t" style="left:277.48px;top:617.01px;font-size:24.80px;color:#000;">Iphone 13</div>
<div class="t" style="left:485.78px;top:617.01px;font-size:24.80px;color:#000;transform:scaleX(1.0200);transform-origin:0 0;">300,000</div>
<div class="t" style="left:716.48px;top:617.01px;font-size:24.80px;color:#000;transform:scaleX(1.0200);transform-origin:0 0;">2</div>
<div class="t" style="left:879.57px;top:614.01px;font-size:24.80px;color:#000;transform:scaleX(1.0230);transform-origin:0 0;">600000</div>
<div class="t" style="left:1073.39px;top:614.01px;font-size:24.80px;color:#000;transform:scaleX(1.0230);transform-origin:0 0;">420000</div>
<div class="t" style="left:142.04px;top:658.67px;font-size:32.29px;color:#000;font-weight:bold;">6</div>
<div class="t" style="left:297.71px;top:666.01px;font-size:24.80px;color:#000;transform:scaleX(1.0200);transform-origin:0 0;">Airpod</div>
<div class="t" style="left:492.35px;top:666.01px;font-size:24.80px;color:#000;transform:scaleX(1.0200);transform-origin:0 0;">15,000</div>
<div class="t" style="left:716.16px;top:666.01px;font-size:24.80px;color:#000;transform:scaleX(1.0200);transform-origin:0 0;">1</div>
<div class="t" style="left:886.29px;top:663.01px;font-size:24.80px;color:#000;transform:scaleX(1.0230);transform-origin:0 0;">15000</div>
<div class="t" style="left:1079.79px;top:663.01px;font-size:24.80px;color:#000;transform:scaleX(1.0230);transform-origin:0 0;">10500</div>
<div class="t" style="left:142.04px;top:707.67px;font-size:32.29px;color:#000;font-weight:bold;">7</div>
<div class="t" style="left:285.50px;top:715.01px;font-size:24.80px;color:#000;transform:scaleX(1.0200);transform-origin:0 0;">Headset</div>
<div class="t" style="left:499.88px;top:715.01px;font-size:24.80px;color:#000;transform:scaleX(1.0200);transform-origin:0 0;">3,500</div>
<div class="t" style="left:716.54px;top:715.01px;font-size:24.80px;color:#000;transform:scaleX(1.0200);transform-origin:0 0;">4</div>
<div class="t" style="left:886.29px;top:712.01px;font-size:24.80px;color:#000;transform:scaleX(1.0230);transform-origin:0 0;">14000</div>
<div class="t" style="left:1087.21px;top:712.01px;font-size:24.80px;color:#000;transform:scaleX(1.0230);transform-origin:0 0;">9800</div>
<div class="t" style="left:142.04px;top:756.67px;font-size:32.29px;color:#000;font-weight:bold;">8</div>
<div class="t" style="left:286.96px;top:764.01px;font-size:24.80px;color:#000;transform:scaleX(1.0200);transform-origin:0 0;">Moderm</div>
<div class="t" style="left:492.35px;top:764.01px;font-size:24.80px;color:#000;transform:scaleX(1.0200);transform-origin:0 0;">17,500</div>
<div class="t" style="left:716.42px;top:764.01px;font-size:24.80px;color:#000;transform:scaleX(1.0200);transform-origin:0 0;">6</div>
<div class="t" style="left:879.25px;top:761.01px;font-size:24.80px;color:#000;transform:scaleX(1.0230);transform-origin:0 0;">105000</div>
<div class="t" style="left:1080.11px;top:761.01px;font-size:24.80px;color:#000;transform:scaleX(1.0230);transform-origin:0 0;">73500</div>
<div class="t" style="left:142.04px;top:805.67px;font-size:32.29px;color:#000;font-weight:bold;">9</div>
<div class="t" style="left:258.05px;top:813.01px;font-size:24.80px;color:#000;transform:scaleX(0.9560);transform-origin:0 0;">Tecno Spark 2</div>
<div class="t" style="left:492.80px;top:813.01px;font-size:24.80px;color:#000;transform:scaleX(1.0200);transform-origin:0 0;">35,000</div>
<div class="t" style="left:716.16px;top:813.01px;font-size:24.80px;color:#000;transform:scaleX(1.0200);transform-origin:0 0;">1</div>
<div class="t" style="left:886.74px;top:810.01px;font-size:24.80px;color:#000;transform:scaleX(1.0230);transform-origin:0 0;">35000</div>
<div class="t" style="left:1080.11px;top:810.01px;font-size:24.80px;color:#000;transform:scaleX(1.0230);transform-origin:0 0;">24500</div>
<div class="a" style="left:68px;top:353px;width:166px;height:2px;background:#136d3b;"></div>
<div class="a" style="left:68px;top:403px;width:160px;height:2px;background:#136d3b;"></div>
<div class="a" style="left:68px;top:353px;width:2px;height:52px;background:#136d3b;"></div>
<div class="a" style="left:232px;top:353px;width:2px;height:46px;background:#136d3b;"></div>
<div class="a" style="left:70px;top:355px;width:162px;height:1px;background:#fff;"></div>
<div class="a" style="left:70px;top:355px;width:1px;height:48px;background:#fff;"></div>
<div class="a" style="left:228px;top:399px;width:8px;height:8px;background:#136d3b;border:1px solid #fff"></div>
<svg width="60" height="70" style="left:950px;top:190px"><path d="M31 62L17 28" stroke="#000" stroke-width="5" fill="none"/><path d="M6 4L27 25L18 27L14 36z" fill="#000"/></svg>
<div class="t" style="left:972.18px;top:255.32px;font-size:30.57px;color:#000;font-weight:bold;transform:scaleX(1.0787);transform-origin:0 0;">Arrange All</div>
<div class="a" style="left:1634px;top:307px;width:29px;height:644px;background:#e6e6e6;"></div>
<div class="a" style="left:1633px;top:354px;width:1px;height:597px;background:#9e9e9e;"></div>
<div class="a" style="left:1636px;top:333px;width:25px;height:600px;background:#dadada;"></div>
<div class="a" style="left:1636px;top:308px;width:25px;height:25px;background:#fff;border:1px solid #7a7a7a"></div>
<svg width="12" height="8" style="left:1643px;top:316px"><path d="M0 6h11L5.5 0z" fill="#777"/></svg>
<div class="a" style="left:1636px;top:333px;width:25px;height:357px;background:#fff;border:1px solid #7a7a7a"></div>
<div class="a" style="left:1636px;top:928px;width:25px;height:24px;background:#fff;border:1px solid #7a7a7a"></div>
<svg width="12" height="8" style="left:1643px;top:937px"><path d="M0 0h11L5.5 6z" fill="#777"/></svg>
<div class="a" style="left:2px;top:951px;width:1661px;height:34px;background:#e6e6e6;border-top:1px solid #a0a0a0"></div>
<svg width="60" height="20" style="left:28px;top:958px" fill="#bdbdbd"><path d="M10 2v14L3 9z"/><path d="M37 2v14l7-7z"/></svg>
<div class="a" style="left:120px;top:951px;width:90px;height:31px;background:#fff;border-left:1px solid #b0b0b0;border-right:1px solid #b0b0b0;border-bottom:2px solid #217346"></div>
<div class="t" style="left:131.41px;top:955.51px;font-size:20.43px;color:#217346;font-weight:bold;transform:scaleX(0.9623);transform-origin:0 0;">Sheet1</div>
<div class="t" style="left:221.83px;top:955.51px;font-size:20.43px;color:#444;transform:scaleX(0.9504);transform-origin:0 0;">Sheet2</div>
<div class="a" style="left:297px;top:956px;width:1px;height:23px;background:#a0a0a0;"></div>
<svg width="26" height="26" style="left:335px;top:954px" fill="none" stroke="#666" stroke-width="1.5"><circle cx="13" cy="13" r="10.5"/><path d="M13 7v12M7 13h12"/></svg>
<svg width="4" height="20" style="left:996px;top:958px" fill="#a0a0a0"><rect x="0" y="0" width="3" height="3"/><rect x="0" y="7" width="3" height="3"/><rect x="0" y="14" width="3" height="3"/></svg>
<div class="a" style="left:1016px;top:955px;width:618px;height:25px;background:#dadada;"></div>
<div class="a" style="left:1016px;top:955px;width:25px;height:25px;background:#fff;border:1px solid #7a7a7a"></div>
<svg width="8" height="12" style="left:1025px;top:961px"><path d="M6 0v11L0 5.5z" fill="#555"/></svg>
<div class="a" style="left:1040px;top:955px;width:498px;height:25px;background:#fff;border:1px solid #7a7a7a"></div>
<div class="a" style="left:1610px;top:955px;width:25px;height:25px;background:#fff;border:1px solid #7a7a7a"></div>
<svg width="8" height="12" style="left:1620px;top:961px"><path d="M0 0v11L6 5.5z" fill="#555"/></svg>
<div class="a" style="left:2px;top:985px;width:1661px;height:32px;background:#f3f2f1;border-top:1px solid #d2d0ce"></div>
<div class="t" style="left:12.19px;top:994.73px;font-size:16.86px;color:#444;transform:scaleX(0.8988);transform-origin:0 0;">Ready</div>
<svg width="26" height="24" style="left:82px;top:990px" fill="none" stroke="#555" stroke-width="1.5"><path d="M1 3h19v6M1 3v16h10"/><path d="M1 7h19M5 11h6M5 15h5"/><circle cx="17" cy="16" r="5.5"/><circle cx="17" cy="16" r="2.5" fill="#555"/></svg>
<svg width="26" height="26" style="left:129px;top:990px" fill="none" stroke="#555" stroke-width="1.5" stroke-linejoin="round" stroke-linecap="round"><circle cx="10.5" cy="3.6" r="2.6"/><path d="M1.5 5.5L7.5 9.5H13.5L19.5 5.5M7.5 9.5V14L4.5 22.5M13.5 9.5V13.5M7.5 14H11"/><path d="M14.5 16.5l7 7M21.5 16.5l-7 7"/></svg>
<div class="t" style="left:157.52px;top:994.73px;font-size:16.86px;color:#444;transform:scaleX(0.9081);transform-origin:0 0;">Accessibility: Investigate</div>
<div class="a" style="left:1202px;top:986px;width:60px;height:31px;background:#d2d0ce;"></div>
<svg width="24" height="24" style="left:1221px;top:990px" fill="none" stroke="#444" stroke-width="1.5"><rect x="1" y="1" width="19" height="19"/><path d="M1 7.3h19M1 13.6h19M7.3 1v19M13.6 1v19"/></svg>
<svg width="24" height="24" style="left:1281px;top:990px" fill="none" stroke="#444" stroke-width="1.5"><rect x="1" y="1" width="20" height="20"/><rect x="5" y="5" width="12" height="12"/><path d="M8 9h6M8 12h6"/></svg>
<svg width="24" height="24" style="left:1341px;top:990px" fill="none" stroke="#444" stroke-width="1.5"><path d="M1 1h20v20H1zM1 13h9V1M5 1v9M16 1v6"/></svg>
<div class="a" style="left:1390px;top:1001px;width:11px;height:1.5px;background:#555;"></div>
<div class="a" style="left:1410px;top:1001px;width:148px;height:1.5px;background:#555;"></div>
<div class="a" style="left:1484px;top:997px;width:1.5px;height:9px;background:#555;"></div>
<div class="a" style="left:1497px;top:992px;width:8px;height:19px;background:#777;"></div>
<div class="a" style="left:1566px;top:1001px;width:11px;height:1.5px;background:#555;"></div>
<div class="a" style="left:1570.75px;top:996px;width:1.5px;height:11px;background:#555;"></div>
<div class="t" style="left:1596.35px;top:994.73px;font-size:16.86px;color:#444;transform:scaleX(0.9080);transform-origin:0 0;">170%</div>
</body></html>
